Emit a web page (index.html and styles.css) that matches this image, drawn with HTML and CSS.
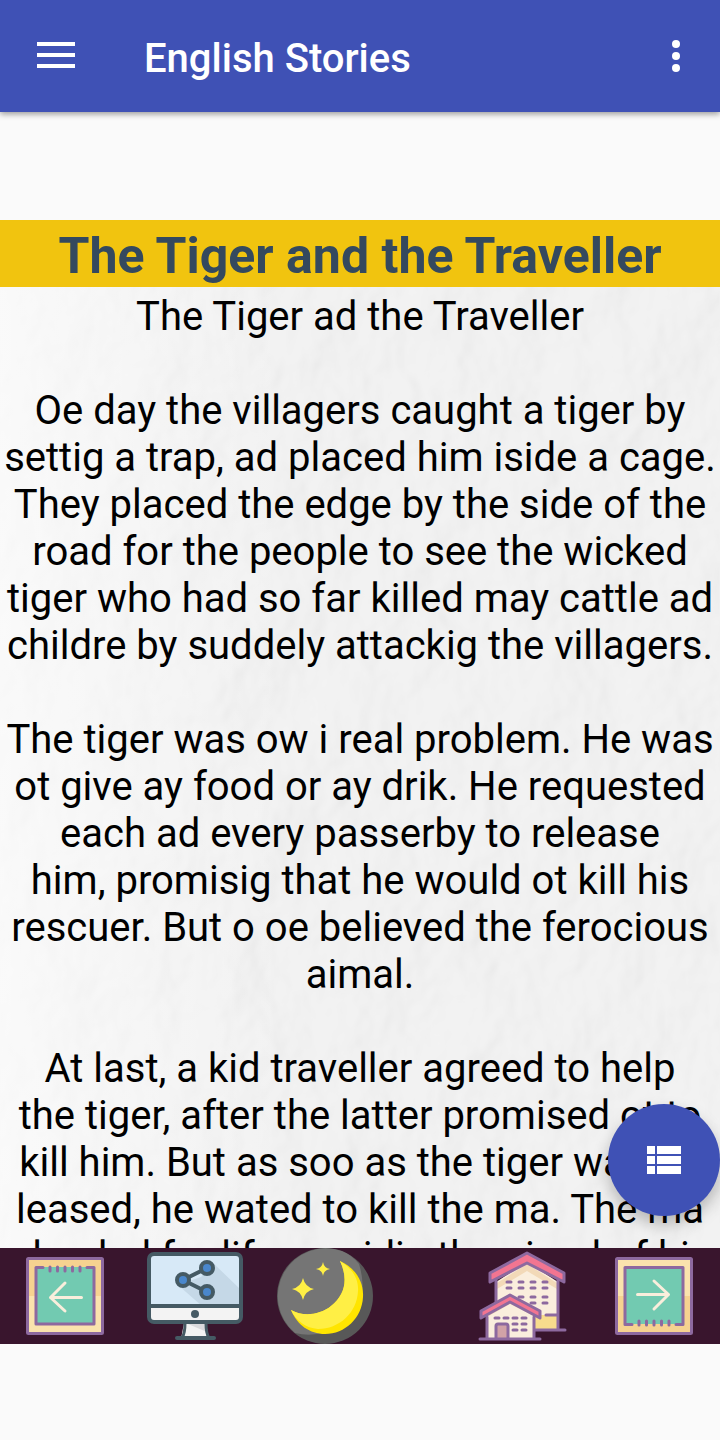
FILE: index.html
```html
<!DOCTYPE html>
<html lang="en">
<head>
  <meta charset="utf-8">
  <meta name="viewport" content="width=device-width, initial-scale=1">
  <title>English Stories</title>
  <link rel="stylesheet" href="styles.css">
</head>
<body>
  <header class="toolbar">
    <button class="icon-btn" aria-label="Menu">
      <svg width="38" height="28" viewBox="0 0 38 28" fill="#fff">
        <path d="M0 0h38v4H0zM0 11h38v4H0zM0 22h38v4H0z"/>
      </svg>
    </button>
    <h1>English Stories</h1>
    <button class="icon-btn" aria-label="More options">
      <svg width="8" height="32" viewBox="0 0 8 32" fill="#fff">
        <circle cx="4" cy="4" r="4"/>
        <circle cx="4" cy="16" r="4"/>
        <circle cx="4" cy="28" r="4"/>
      </svg>
    </button>
  </header>

  <main class="reader">
    <h2 class="story-title">The Tiger and the Traveller</h2>
    <div class="story">
      <p>The Tiger ad the Traveller</p>
      <p>Oe day the villagers caught a tiger by settig a trap, ad placed him iside a cage. They placed the edge by the side of the road for the people to see the wicked tiger who had so far killed may cattle ad childre by suddely attackig the villagers.</p>
      <p>The tiger was ow i real problem. He was ot give ay food or ay drik. He requested each ad every passerby to release<br>him, promisig that he would ot kill his rescuer. But o oe believed the ferocious aimal.</p>
      <p>At last, a kid traveller agreed to help<br>the tiger, after the latter promised ot to kill him. But as soo as the tiger was re-leased, he wated to kill the ma. The ma pleaded for life, remidig the aimal of his</p>
    </div>
    <button class="fab" aria-label="Story list">
      <svg width="34" height="28" viewBox="0 0 34 28" fill="#fff">
        <path d="M0 0h8v8H0zM10 0h24v8H10zM0 10h8v8H0zM10 10h24v8H10zM0 20h8v8H0zM10 20h24v8H10z"/>
      </svg>
    </button>
  </main>

  <nav class="bottom-bar">
    <button aria-label="Previous story">
      <svg viewBox="0 0 96 96">
        <path fill="#f6d290" d="M10 10h76v76H10z"/>
        <path fill="#fae3ad" d="M10 48h76v38H10z"/>
        <rect x="10.500" y="10.500" width="75" height="75" rx="1" fill="none" stroke="#8d699f" stroke-width="3"/>
        <path fill="#72cab1" d="M19 19h58v57H19z"/>
        <path d="M26 19.500h-7v56.500h58V19.500h-7" fill="none" stroke="#8d699f" stroke-width="3" stroke-linecap="round" stroke-linejoin="round"/>
        <path d="M33 19v4M40.500 19v4M48 19v4M55.500 19v4M63 19v4" stroke="#8d699f" stroke-width="3" stroke-linecap="round"/>
        <path d="M64.500 49.500h-31M48 35L33.500 49.500 48 63" fill="none" stroke="#f9eedc" stroke-width="3" stroke-linecap="round" stroke-linejoin="round"/>
      </svg>
    </button>
    <button aria-label="Share">
      <svg viewBox="0 0 96 96">
        <path fill="#f3f3f3" d="M37 75h22l3 16H34z"/>
        <path fill="#d9d9dc" d="M41 76h18l1 8z"/>
        <path d="M38 75c0 8-1 12-3 15M59 75c0 8 1 12 3 15" fill="none" stroke="#455a64" stroke-width="3"/>
        <path d="M30 90h37" stroke="#455a64" stroke-width="4" stroke-linecap="round"/>
        <rect x="2" y="6" width="92" height="68" rx="5" fill="#d7e9f7"/>
        <path fill="#c5d8e7" d="M66 15l26 25v18H55L31 37l23-8z"/>
        <path fill="#f3f3f3" d="M2 58h92v12q0 4-4 4H6q-4 0-4-4z"/>
        <path d="M2 58h92" stroke="#455a64" stroke-width="4"/>
        <rect x="2" y="6" width="92" height="68" rx="5" fill="none" stroke="#455a64" stroke-width="4"/>
        <circle cx="48" cy="66" r="4" fill="#455a64"/>
        <path d="M60 20L36 32l24 12" fill="none" stroke="#455a64" stroke-width="4"/>
        <g fill="#4a87cc" stroke="#455a64" stroke-width="4">
          <circle cx="60" cy="20" r="6"/>
          <circle cx="36" cy="32" r="6"/>
          <circle cx="60" cy="44" r="6"/>
        </g>
      </svg>
    </button>
    <button aria-label="Night mode">
      <svg viewBox="0 0 96 96">
        <circle cx="48" cy="48" r="48" fill="#585858"/>
        <path fill="#757575" d="M65 3A48 48 0 0 0 18 85Q42 91 66 76 94 55 82 16 75 7 65 3z"/>
        <path fill="#ffe500" d="M63 13C78 20 87 33 86 49 85 70 68 86 48 86 33 86 20 77 14 62 26 69 43 67 54 58 69 46 71 30 63 13z"/>
        <path fill="#ffef45" d="M63 13C75 20 82 31 81 43 80 65 62 81 41 81 29 80 19 73 14 62 26 69 43 67 54 58 69 46 71 30 63 13z"/>
        <path fill="#ffef45" d="M26 30q2 9 11 11-9 2-11 11-2-9-11-11 9-2 11-11zM46 14q1 6 7 7-6 1-7 7-1-6-7-7 6-1 7-7z"/>
      </svg>
    </button>
    <button class="home" aria-label="Home">
      <svg viewBox="0 0 96 96">
        <path fill="#faeedd" d="M24 34l31-20 31 20v48H24z"/>
        <path fill="#f2d9b8" d="M25 35l30-19 30 19v6L55 23 25 41z"/>
        <path fill="#f8dc8d" d="M63 67h23v14H63z"/>
        <path d="M24 32v28M86 32v49M74 67h12M62 82h31" fill="none" stroke="#8d699f" stroke-width="3" stroke-linecap="round"/>
        <path fill="#f27591" stroke="#8d699f" stroke-width="3" stroke-linejoin="round" d="M55 5l37 20v9L55 15 18 34v-9z"/>
        <path d="M35 34h4M47 34h4M59 34h4M71 34h4M35 40h4M47 40h4M59 40h4M71 40h4M47 49h4M59 49h4M71 49h4M59 55h4M71 55h4" stroke="#8d699f" stroke-width="3" stroke-linecap="round"/>
        <path fill="#faeedd" d="M15 64l23-14 24 14v26H15z"/>
        <path fill="#f2d9b8" d="M15 64l23-14 24 14v4L38 56 15 69z"/>
        <path fill="#f27591" stroke="#8d699f" stroke-width="3" stroke-linejoin="round" d="M38 47l30 16v7L38 54 9 70v-7z"/>
        <path fill="#d1a2a7" stroke="#8d699f" stroke-width="3" d="M24 90V78q0-2 2-2h8q2 0 2 2v12"/>
        <path d="M15 69v21M62 69v21M8 91h60M23 70h4M32 70h4M41 70h4M50 70h4M41 76h4M50 76h4M41 82h4M50 82h4" fill="none" stroke="#8d699f" stroke-width="3" stroke-linecap="round"/>
      </svg>
    </button>
    <button aria-label="Next story">
      <svg viewBox="0 0 96 96">
        <path fill="#fae3ad" d="M10 10h76v76H10z"/>
        <path fill="#f6d290" d="M10 48h76v38H10z"/>
        <rect x="10.500" y="10.500" width="75" height="75" rx="1" fill="none" stroke="#8d699f" stroke-width="3"/>
        <path fill="#72cab1" d="M19 19h58v57H19z"/>
        <path d="M26 76.500h-7V19.500h58v57h-7" fill="none" stroke="#8d699f" stroke-width="3" stroke-linecap="round" stroke-linejoin="round"/>
        <path d="M33 73v4M40.500 73v4M48 73v4M55.500 73v4M63 73v4" stroke="#8d699f" stroke-width="3" stroke-linecap="round"/>
        <path d="M31.500 46.500h31M48 33l14.500 13.500L48 61" fill="none" stroke="#f9eedc" stroke-width="3" stroke-linecap="round" stroke-linejoin="round"/>
      </svg>
    </button>
  </nav>
</body>
</html>
```
FILE: styles.css
```css
* {
  box-sizing: border-box;
}

body {
  margin: 0;
  height: 100vh;
  padding-bottom: 96px;
  display: flex;
  flex-direction: column;
  background-color: #fafafa;
  font-family: Roboto, "Liberation Sans", sans-serif;
}

button {
  padding: 0;
  border: none;
  background: none;
  cursor: pointer;
}

svg {
  display: block;
}

.toolbar {
  display: flex;
  align-items: center;
  flex-shrink: 0;
  height: 112px;
  padding: 0 20px 0 32px;
  background-color: #3f51b5;
  box-shadow: 0 2px 6px rgba(0, 0, 0, 0.4);
}

.toolbar h1 {
  flex: 1;
  margin: 4px 0 0 64px;
  color: #fff;
  font-size: 40px;
  font-weight: 500;
}

.icon-btn {
  display: flex;
  align-items: center;
  justify-content: center;
  width: 48px;
  height: 48px;
}

.reader {
  position: relative;
  flex: 1;
  display: flex;
  flex-direction: column;
  min-height: 0;
  margin-top: 108px;
}

.story-title {
  margin: 0;
  padding: 7px 0 1px;
  background-color: #f1c40f;
  color: #34495e;
  font-size: 50px;
  line-height: 59px;
  text-align: center;
}

.story {
  flex: 1;
  min-height: 0;
  padding-top: 6px;
  overflow-y: auto;
  scrollbar-width: none;
  background-color: #f0f0f0;
  /* rough plaster wall, lit from the left */
  background-image:
    linear-gradient(to right, rgba(255, 255, 255, 0.6), rgba(255, 255, 255, 0) 40%),
    url("data:image/svg+xml,%3Csvg xmlns='http://www.w3.org/2000/svg' width='720' height='961'%3E%3Cfilter id='p' x='0' y='0' width='100%25' height='100%25'%3E%3CfeTurbulence type='fractalNoise' baseFrequency='.012 .01' numOctaves='4' seed='8'/%3E%3CfeDiffuseLighting surfaceScale='14' diffuseConstant='1.1' lighting-color='%23f2f2f2'%3E%3CfeDistantLight azimuth='200' elevation='60'/%3E%3C/feDiffuseLighting%3E%3C/filter%3E%3Crect width='720' height='961' fill='%23f2f2f2'/%3E%3Crect width='720' height='961' filter='url(%23p)' opacity='.1'/%3E%3C/svg%3E");
  color: #000;
  font-size: 40px;
  line-height: 47px;
  text-align: center;
}

.story p {
  margin: 0 0 47px;
}

.fab {
  position: absolute;
  right: 0;
  bottom: 32px;
  display: flex;
  align-items: center;
  justify-content: center;
  width: 112px;
  height: 112px;
  border-radius: 50%;
  background-color: #3f51b5;
  box-shadow: 0 8px 16px rgba(0, 0, 0, 0.25);
}

.bottom-bar {
  display: flex;
  gap: 34px;
  flex-shrink: 0;
  height: 96px;
  padding: 0 18px 0 17px;
  background-color: #39152d;
}

.bottom-bar button {
  width: 96px;
  height: 96px;
}

.bottom-bar .home {
  margin-left: auto;
  margin-right: 4px;
}
```
